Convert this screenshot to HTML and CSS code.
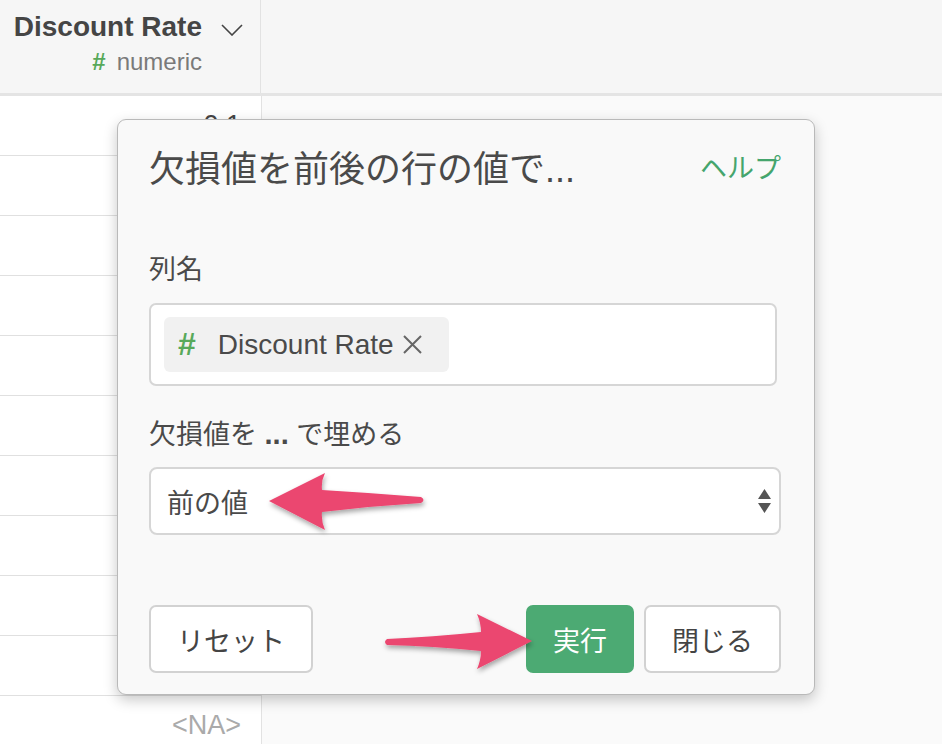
FILE: index.html
```html
<!DOCTYPE html>
<html lang="ja">
<head>
  <meta charset="UTF-8" />
  <meta name="viewport" content="width=device-width, initial-scale=1.0"/>
  <title>欠損値を前後の行の値で埋める</title>
  <link rel="stylesheet" href="styles.css">
</head>
<body>

<div class="sheet">
  <div class="head-row">
    <div class="head-cell">
      <div class="head-text">
        <div class="col-name">Discount Rate</div>
        <div class="col-type"><span class="hash">#</span>numeric</div>
      </div>
      <svg class="chevron" width="22" height="12" viewBox="0 0 22 12"><path d="M1 1 L11 11 L21 1" fill="none" stroke="#444" stroke-width="1.6"/></svg>
    </div>
    <div class="head-rest"></div>
  </div>
  <div class="body-row">
    <div class="col">
      <div class="cell">0.1</div>
      <div class="cell"></div>
      <div class="cell"></div>
      <div class="cell"></div>
      <div class="cell"></div>
      <div class="cell"></div>
      <div class="cell"></div>
      <div class="cell"></div>
      <div class="cell"></div>
      <div class="cell"></div>
      <div class="cell na">&lt;NA&gt;</div>
    </div>
    <div class="rest"></div>
  </div>
</div>

<div class="dialog">
  <div class="dlg-head">
    <h2>欠損値を前後の行の値で...</h2>
    <a class="help" href="#">ヘルプ</a>
  </div>

  <label class="field-label">列名</label>
  <div class="tag-input">
    <span class="chip">
      <span class="chip-hash">#</span>
      <span class="chip-name">Discount Rate</span>
      <svg class="chip-x" width="21" height="21" viewBox="0 0 21 21"><path d="M2 2 L19 19 M19 2 L2 19" stroke="#666" stroke-width="2"/></svg>
    </span>
  </div>

  <label class="field-label second">欠損値を <b>...</b> で埋める</label>
  <div class="select">
    <span>前の値</span>
    <svg class="updown" width="13" height="24" viewBox="0 0 13 24"><path d="M6.5 0 L13 10 L0 10 Z M0 14 L13 14 L6.5 24 Z" fill="#555"/></svg>
  </div>

  <div class="actions">
    <button class="btn">リセット</button>
    <span class="spacer"></span>
    <button class="btn primary">実行</button>
    <button class="btn">閉じる</button>
  </div>
</div>

<svg class="marks" width="942" height="744" viewBox="0 0 942 744">
  <defs>
    <filter id="shadow" x="-20%" y="-40%" width="140%" height="180%">
      <feDropShadow dx="1" dy="3" stdDeviation="2.5" flood-color="#000" flood-opacity="0.35"/>
    </filter>
  </defs>
  <path filter="url(#shadow)" fill="#eb4670"
        d="M269 501 L325 473 Q321 481 322 490 Q372 493 421 497 Q426 500 421 503 Q372 506 322 512 Q321 521 325 530 Z"/>
  <path filter="url(#shadow)" fill="#eb4670"
        d="M532 641 L477 614 Q481 623 481 632 Q432 637 387 639 Q383 642 387 645 Q432 646 481 651 Q481 660 477 669 Z"/>
</svg>

</body>
</html>
```

FILE: styles.css
```css
body { margin: 0; font-family: "Liberation Sans", "Noto Sans CJK JP", sans-serif; color: #444; background: #fafafa; }

.sheet { width: 942px; height: 744px; overflow: hidden; }
.head-row { display: flex; height: 93px; background: #f6f6f6; border-bottom: 3px solid #e4e4e4; }
.head-cell { width: 261px; border-right: 1px solid #e2e2e2; display: flex; justify-content: flex-end; align-items: flex-start; padding: 9px 17px 0 0; box-sizing: border-box; }
.head-text { text-align: right; }
.col-name { font-size: 28px; font-weight: bold; line-height: 36px; color: #454545; }
.col-type { font-size: 24px; line-height: 30px; color: #7a7a7a; margin-top: 2px; }
.hash { color: #58a95a; font-weight: bold; margin-right: 11px; }
.chevron { margin: 15px 0 0 19px; }
.head-rest { flex: 1; }

.body-row { display: flex; }
.col { width: 261px; border-right: 1px solid #e2e2e2; background: #fff; }
.cell { height: 60px; box-sizing: border-box; border-bottom: 1px solid #e0e0e0; text-align: right; padding-right: 20px; font-size: 27px; line-height: 59px; color: #444; }
.cell.na { color: #aaa; border-bottom: none; }
.rest { flex: 1; }

.dialog { position: absolute; left: 117px; top: 119px; width: 698px; height: 576px; box-sizing: border-box; padding: 0 33px 0 31px; background: #f9f9f9; border: 1px solid #b9b9b9; border-radius: 9px; box-shadow: 0 5px 14px rgba(0, 0, 0, 0.22); }
.dlg-head { display: flex; justify-content: space-between; align-items: center; height: 42px; margin-top: 25px; }
.dlg-head h2 { margin: 0; font-size: 36px; font-weight: normal; color: #4a4a4a; }
.help { color: #45a56d; text-decoration: none; font-size: 27px; }

.field-label { display: block; font-size: 27px; line-height: 32px; margin-top: 67px; color: #4a4a4a; }
.field-label.second { margin-top: 32px; }
.field-label b { font-weight: bold; font-size: 29px; }

.tag-input { margin: 17px 4px 0 0; height: 83px; box-sizing: border-box; padding: 12px 13px; background: #fff; border: 2px solid #d6d6d6; border-radius: 7px; }
.chip { display: inline-flex; align-items: center; height: 55px; padding: 0 26px 0 14px; background: #f1f1f1; border-radius: 6px; font-size: 28px; color: #4a4a4a; }
.chip-hash { color: #58a95a; font-weight: bold; font-size: 32px; margin-right: 22px; }
.chip-x { margin-left: 8px; }

.select { margin-top: 16px; height: 68px; box-sizing: border-box; display: flex; align-items: center; justify-content: space-between; padding: 0 8px 0 16px; background: #fff; border: 2px solid #d6d6d6; border-radius: 8px; font-size: 27px; color: #4a4a4a; }

.actions { display: flex; gap: 10px; margin-top: 70px; }
.spacer { flex: 1; }
.btn { height: 68px; padding: 0 26px; font-family: inherit; font-size: 27px; color: #444; background: #fff; border: 2px solid #d2d2d2; border-radius: 7px; }
.btn.primary { background: #4caa73; border-color: #4caa73; color: #fff; padding: 0 25px; }

.marks { position: absolute; left: 0; top: 0; pointer-events: none; }
```
